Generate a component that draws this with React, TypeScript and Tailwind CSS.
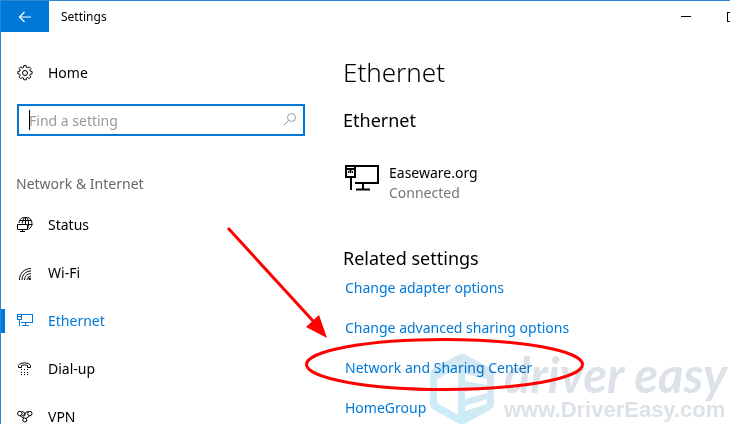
import type { ReactNode } from "react"

const EthernetIcon = ({ className }: { className: string }) => (
  <svg viewBox="0 0 34 26" className={className} fill="none" stroke="currentColor" strokeWidth="2" aria-hidden="true">
    <path d="M10 1h23v17H10" />
    <path d="M1 1h9v11H1zM1 4h9M5.500 4v4M3 7h1M7 7h1M6 12v13M18 18v6M11 24.500h14" />
  </svg>
)

const SmallEthernetIcon = () => (
  <svg viewBox="0 0 16 16" className="size-4" fill="none" stroke="currentColor" shapeRendering="crispEdges" aria-hidden="true">
    <path d="M4 1.500h11.500v8H4M.5 1.500h4v5h-4zM1 3.500h3M2.500 6.500v6M8.500 9.500v3M5 12.500h7" />
  </svg>
)

const GearIcon = () => (
  <svg viewBox="0 0 16 16" className="size-4" fill="none" stroke="currentColor" strokeWidth="1" strokeLinejoin="round" aria-hidden="true">
    <path d="M6.800.6h2.400l.3 1.800 1.200.5 1.500-1.100 1.700 1.700-1.100 1.500.5 1.200 1.800.3v2.400l-1.800.3-.5 1.200 1.100 1.500-1.700 1.700-1.500-1.100-1.200.5-.3 1.800H6.800l-.3-1.800-1.200-.5-1.500 1.100-1.700-1.700 1.100-1.500-.5-1.200-1.800-.3V6.500l1.800-.3.5-1.200-1.100-1.500 1.700-1.700 1.500 1.100 1.200-.5z" />
    <circle cx="8" cy="8" r="2.500" />
  </svg>
)

const StatusIcon = () => (
  <svg viewBox="0 0 16 16" className="size-4" fill="none" stroke="currentColor" aria-hidden="true">
    <path d="M2 6A6.500 6.500 0 1 1 11.500 12.200M2.500 3.500h12M11 7.500h4.500M5.500 6.500C5.500 3 7 .5 8.500 0c2 .7 3 3.500 3 6s-.3 4-1 6M8.500 0v7" />
    <path d="M.5 7.500h10v5H.5zM5.500 12.500v2M3 14.500h5" />
  </svg>
)

const WifiIcon = () => (
  <svg viewBox="0 0 16 16" className="size-4" fill="none" stroke="currentColor" aria-hidden="true">
    <path d="M2.500 15C2.500 8.500 7 3.600 14 3.500M5 15c0-5 3.500-9 9-9M7.500 15c0-3.500 2.500-6.300 6.500-6.400M10 15c0-2 1.500-3.800 4-3.900" />
    <circle cx="12.700" cy="13.700" r="1.300" fill="currentColor" stroke="none" />
  </svg>
)

const DialUpIcon = () => (
  <svg viewBox="0 0 16 16" className="size-4" fill="none" stroke="currentColor" aria-hidden="true">
    <path d="M1.500 6.500V4.500C3 1 12 1 13.500 4.500v2h-3V4.500c-1.500-.7-4.500-.7-6 0v2z" />
    <path d="M4 8.500h1m2 0h1m2 0h1M4 11.500h1m2 0h1m2 0h1M4 13.500h1m2 0h1m2 0h1" />
  </svg>
)

const VpnIcon = () => (
  <svg viewBox="0 0 16 16" className="size-4" fill="none" stroke="currentColor" aria-hidden="true">
    <circle cx="2.800" cy="4.500" r="2.200" />
    <circle cx="12.800" cy="4.500" r="2.200" />
    <circle cx="7.800" cy="11" r="2" />
    <path d="M4.500 3c2-1 3 .5 3.500 2S6.500 8 5.500 8.500M11.500 3C9 2 8.500 4 8 5L5 7M3 6.700l4 2.800M12.800 6.700L9 9.500" />
  </svg>
)

const navItems: { label: string; icon: ReactNode; active?: boolean }[] = [
  { label: "Status", icon: <StatusIcon /> },
  { label: "Wi-Fi", icon: <WifiIcon /> },
  { label: "Ethernet", icon: <SmallEthernetIcon />, active: true },
  { label: "Dial-up", icon: <DialUpIcon /> },
  { label: "VPN", icon: <VpnIcon /> },
]

const relatedLinks = [
  "Change adapter options",
  "Change advanced sharing options",
  "Network and Sharing Center",
  "HomeGroup",
]

const TitleBar = () => (
  <header className="flex h-[31px] items-center">
    <button aria-label="Back" className="flex h-full w-12 items-center justify-center bg-[#0078d7] text-white">
      <svg viewBox="0 0 14 12" className="h-3 w-3.5" fill="none" stroke="currentColor" strokeWidth="1.200" aria-hidden="true">
        <path d="M13 6H1.500M6.500 1l-5 5 5 5" />
      </svg>
    </button>
    <span className="ml-3 text-xs">Settings</span>
    <div className="ml-auto flex h-full">
      <button aria-label="Minimize" className="flex w-10 items-center justify-center">
        <span className="h-px w-2.5 bg-black" />
      </button>
      <button aria-label="Maximize" className="flex w-6 items-center justify-end overflow-hidden">
        <span className="-mr-[7px] size-2.5 shrink-0 border border-black" />
      </button>
    </div>
  </header>
)

const Sidebar = () => (
  <aside className="w-[304px] shrink-0">
    <a href="#home" className="mt-[21px] flex h-10 items-center gap-[15px] pl-4 text-sm">
      <GearIcon />
      Home
    </a>
    <div className="relative mt-[11px] ml-4">
      <input
        type="text"
        aria-label="Find a setting"
        placeholder="Find a setting"
        className="block h-8 w-full border-2 border-[#0078d7] px-2.5 text-sm outline-none placeholder:text-[#999]"
      />
      <span className="absolute top-1.5 left-3 h-5 w-px bg-black" />
      <svg viewBox="0 0 14 14" className="absolute top-2 right-2 size-3.5 text-[#999]" fill="none" stroke="currentColor" aria-hidden="true">
        <circle cx="8.500" cy="5.500" r="4" />
        <path d="M5.500 8.500L1 13" />
      </svg>
    </div>
    <h2 className="mt-9 pl-[15px] text-sm leading-6 text-[#666]">Network &amp; Internet</h2>
    <nav className="mt-[5px]">
      {navItems.map((item) => (
        <a
          key={item.label}
          href="#"
          className={`relative flex h-12 items-center gap-[15px] pl-4 text-sm ${item.active ? "text-[#0078d7]" : ""}`}
        >
          {item.active && <span className="absolute left-0 h-6 w-1 bg-[#0078d7]" />}
          {item.icon}
          {item.label}
        </a>
      ))}
    </nav>
  </aside>
)

const EthernetPage = () => (
  <main className="ml-[38px] grow">
    <h1 className="mt-5 text-[26px] leading-10 font-light">Ethernet</h1>
    <h2 className="mt-3 text-lg leading-8">Ethernet</h2>
    <div className="mt-[27px] flex items-start gap-2.5">
      <EthernetIcon className="mt-0.5 ml-0.5 h-[26px] w-[34px]" />
      <div className="text-sm leading-5">
        <p>Easeware.org</p>
        <p className="text-[#767676]">Connected</p>
      </div>
    </div>
    <h2 className="mt-[35px] text-lg leading-10">Related settings</h2>
    <ul className="pl-0.5 text-sm">
      {relatedLinks.map((link) => (
        <li key={link} className="mb-5 leading-5">
          <a href="#" className="text-[#0078d7]">{link}</a>
        </li>
      ))}
    </ul>
  </main>
)

const Watermark = () => (
  <div className="pointer-events-none absolute right-0 bottom-0 flex h-[70px] w-[300px] gap-2.5 mix-blend-multiply">
    <svg viewBox="0 0 64 70" className="h-[70px] w-16 shrink-0 opacity-60" aria-hidden="true">
      <defs>
        <linearGradient id="shield" x1="0" y1="1" x2="1" y2="0">
          <stop offset="0" stopColor="#a4e4f8" />
          <stop offset="1" stopColor="#bdd3e2" />
        </linearGradient>
      </defs>
      <path
        fill="url(#shield)"
        fillRule="evenodd"
        d="M28 1q4-2 8 0l24 13q4 2 4 7v28q0 5-4 7L36 69q-4 2-8 0L4 56q-4-2-4-7V21q0-5 4-7zM28 14L9 24q-2 1-2 3v20q0 2 2 3l19 11zM35 20l22 5v6l-22-4zM35 38l22-5v6l-22 6zM35 52l22-7v5l-22 7z"
      />
    </svg>
    <div className="font-bold whitespace-nowrap text-[#dce2e7]">
      <p className="mb-1 font-['Lato'] text-[49px] leading-10 italic">driver easy</p>
      <p className="font-['Liberation_Sans'] text-[22px] leading-6">www.DriverEasy.com</p>
    </div>
  </div>
)

const Annotations = () => (
  <svg viewBox="0 0 730 424" className="pointer-events-none absolute -top-px -left-px h-[424px] w-[730px]" aria-hidden="true">
    <ellipse cx="444.500" cy="364.500" rx="138" ry="25" fill="none" stroke="#f00" strokeWidth="3" />
    <path d="M228 228L314 322" stroke="#f00" strokeWidth="3" />
    <path d="M327 338L306 327L319 315z" fill="#f00" />
  </svg>
)

const App = () => {
  return (
    <div className="relative h-screen overflow-hidden border-t border-l border-[#2b88d8] bg-white font-['Noto_Sans',sans-serif] text-black">
      <TitleBar />
      <div className="flex">
        <Sidebar />
        <EthernetPage />
      </div>
      <Watermark />
      <Annotations />
    </div>
  )
}

export default App
